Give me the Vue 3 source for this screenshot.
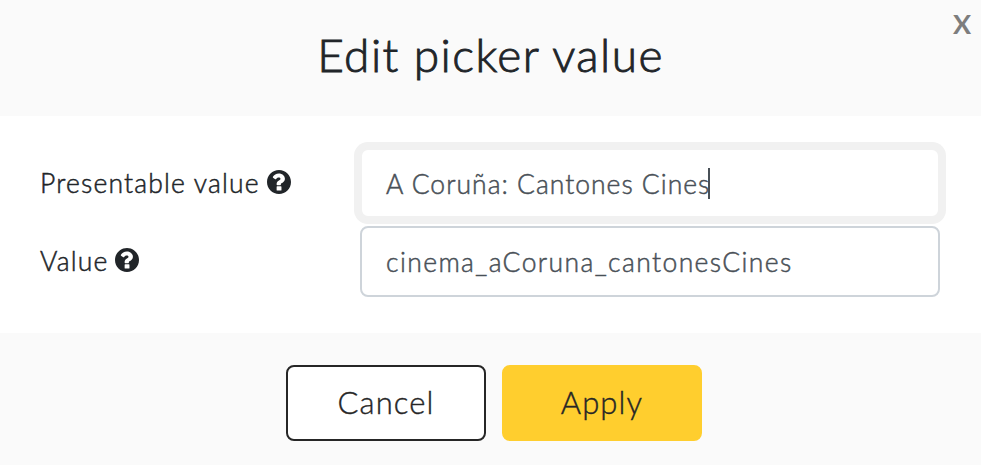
<script setup>
import { ref } from "vue";

// variables
const focused = ref("presentable");
const fields = ref([
  { key: "presentable", title: "Presentable value", value: "A Coruña: Cantones Cines" },
  { key: "raw", title: "Value", value: "cinema_aCoruna_cantonesCines" },
]);

// functions
function focusField(key) {
  focused.value = key;
}
</script>

<template>
  <div class="modal">
    <header class="modal-header">
      <h1 class="title">Edit picker value</h1>
      <button class="close" aria-label="Close">X</button>
    </header>
    <main class="modal-body">
      <div v-for="field in fields" :key="field.key" :class="['row', field.key]">
        <div class="label">
          <span>{{ field.title }}</span>
          <svg class="help" viewBox="8 8 496 496">
            <path
              d="M504 256c0 137-111 248-248 248S8 393 8 256 119 8 256 8s248 111 248 248zM256 78c-62 0-101 27-126 72-3 6-2 12 3 16l45 32c6 4 13 3 17-2 16-20 29-32 54-32 20 0 38 9 38 26 0 15-12 23-31 33-24 13-49 32-49 70v16c0 7 5 12 12 12h64c7 0 12-5 12-12v-9c0-26 83-34 83-112 0-67-62-110-122-110zM219 342q-12 0-12 12v66q0 12 12 12h76q12 0 12-12v-66q0-12-12-12z"
            />
          </svg>
        </div>
        <div
          :class="['field', { focused: focused === field.key }]"
          @click="focusField(field.key)"
        >
          <span>{{ field.value }}</span>
          <i v-if="focused === field.key" class="caret"></i>
        </div>
      </div>
    </main>
    <footer class="modal-footer">
      <button class="btn cancel">Cancel</button>
      <button class="btn apply">Apply</button>
    </footer>
  </div>
</template>

<style>
body {
  background: #fff;
}
</style>

<style scoped>
.modal {
  display: flex;
  flex-direction: column;
  height: 465px;
  overflow: hidden;
  font-family: Lato, "Liberation Sans", sans-serif;
  font-weight: 300;
  color: #212529;
}
.modal-header {
  position: relative;
  box-sizing: border-box;
  height: 116px;
  padding-top: 27px;
  background: #fafafa;
  text-align: center;
}
.title {
  margin: 0;
  font-size: 46px;
  line-height: 56px;
  font-weight: 300;
  letter-spacing: 1.45px;
  -webkit-text-stroke: 0.9px currentColor;
}
.close {
  position: absolute;
  top: 9px;
  right: 10px;
  padding: 0;
  border: 0;
  background: none;
  color: #7d7d7d;
  font: 700 27px/30px Lato, sans-serif;
}
.modal-body {
  box-sizing: border-box;
  height: 217px;
  padding: 32px 41px 0 40px;
  display: flex;
  flex-direction: column;
  gap: 7px;
}
.row {
  display: flex;
}
.label {
  display: flex;
  align-items: center;
  gap: 7px;
  width: 320px;
  height: 70px;
  font-size: 26.5px;
  letter-spacing: 1.18px;
  -webkit-text-stroke: 0.5px currentColor;
}
.help {
  width: 24px;
  height: 24px;
  margin-bottom: 2px;
  fill: #212529;
}
.field {
  display: flex;
  align-items: center;
  box-sizing: border-box;
  width: 580px;
  height: 71px;
  padding: 1px 0 0 24px;
  border: 2px solid #ced4da;
  border-radius: 8px;
  background: #fff;
  color: #495057;
  font-size: 26.5px;
  letter-spacing: 1px;
  -webkit-text-stroke: 0.5px currentColor;
}
.field.focused {
  height: 70px;
  margin-bottom: 1px;
  border-color: #f1f1f1;
  box-shadow: 0 0 0 6px #f1f1f1;
}
.raw .field {
  letter-spacing: 1.4px;
}
.caret {
  width: 2px;
  height: 31px;
  margin-left: -2px;
  background: #495057;
}
.modal-footer {
  flex: 1;
  display: flex;
  justify-content: center;
  gap: 16px;
  padding: 32px 0 0 7px;
  background: #fafafa;
}
.btn {
  box-sizing: border-box;
  width: 200px;
  height: 76px;
  padding: 0 0 3px;
  border: 2px solid #262626;
  border-radius: 8px;
  background: #fff;
  color: #262626;
  font: 300 31px/40px Lato, sans-serif;
  letter-spacing: 1.1px;
  -webkit-text-stroke: 0.4px currentColor;
}
.btn.apply {
  border-color: #ffce2e;
  background: #ffce2e;
}
</style>
